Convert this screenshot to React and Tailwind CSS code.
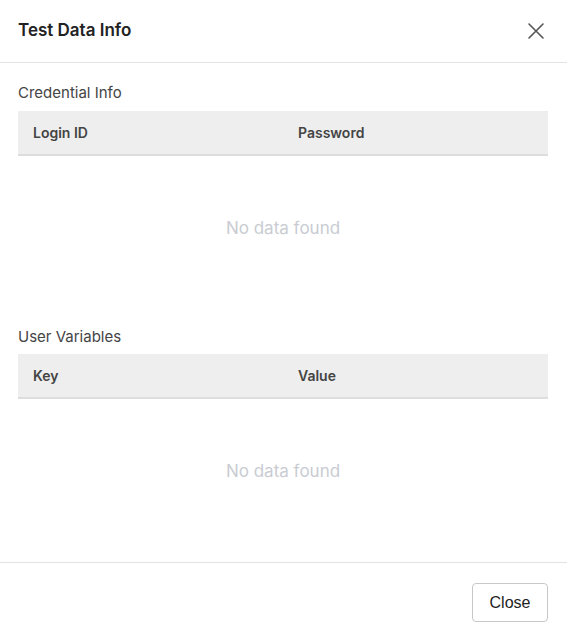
import React from "react";

function EmptyTable({ c1, c2 }) {
  return (
    <div className="w-full">
      <div className="flex h-[45px] items-center pb-[1px] bg-[#eeeeee] border-b-2 border-[#dddddd] text-[14px] font-semibold text-[#444444]">
        <div className="w-[280px] pl-[15px]">{c1}</div>
        <div>{c2}</div>
      </div>
      <div className="flex h-[142px] items-center justify-center pt-[3px] text-[17px] text-[#c9ccd2]">
        No data found
      </div>
    </div>
  );
}

export default function App() {
  return (
    <div className="w-[567px] h-[643px] bg-white flex flex-col" style={{ fontFamily: "Inter, 'Noto Sans', sans-serif" }}>
      <div className="h-[63px] flex items-center justify-between pl-[18px] pr-[22px] border-b border-[#e3e3e3]">
        <div className="text-[17px] font-semibold text-[#222222]">Test Data Info</div>
        <svg width="18" height="18" viewBox="0 0 18 18" fill="none" stroke="#555555" strokeWidth="1.6" strokeLinecap="round">
          <path d="M2 2 L16 16 M16 2 L2 16" />
        </svg>
      </div>
      <div className="flex-1 pl-[18px] pr-[19px] pt-[20px]">
        <div className="text-[15px] leading-[20px] text-[#444444] mb-[8px]">Credential Info</div>
        <EmptyTable c1="Login ID" c2="Password" />
        <div className="text-[15px] leading-[20px] text-[#444444] mt-[29px] mb-[7px]">User Variables</div>
        <EmptyTable c1="Key" c2="Value" />
      </div>
      <div className="h-[81px] border-t border-[#e3e3e3] flex items-start justify-end pr-[19px] pt-[20px]">
        <button className="h-[39px] w-[76px] rounded-[4px] border border-[#c8c8c8] bg-white text-[16px] text-[#222222]" style={{ fontFamily: "'Liberation Sans', Arial, sans-serif" }}>
          Close
        </button>
      </div>
    </div>
  );
}
